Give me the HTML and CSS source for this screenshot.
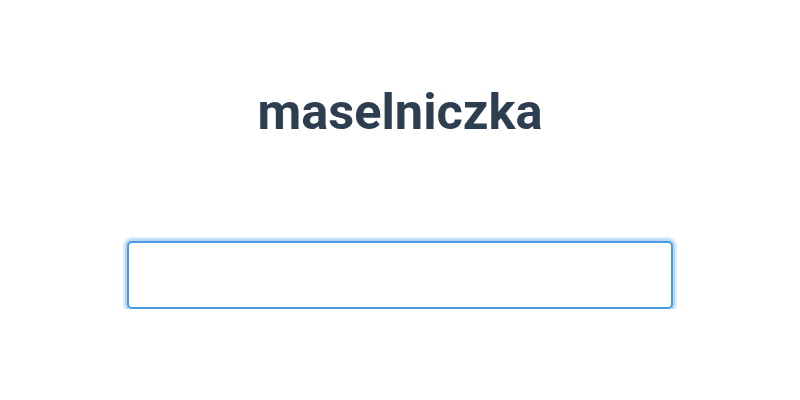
FILE: index.html
```
<!DOCTYPE html>
<html>
<head>
<meta charset="utf-8">
<link rel="stylesheet" href="styles.css">
</head>
<body>
<div class="page">
  <h1 class="title">maselniczka</h1>
  <input class="field" type="text">
</div>
</body>
</html>
```
FILE: styles.css
```
html, body {
  margin: 0;
  padding: 0;
  background: #ffffff;
}
.page {
  display: flex;
  flex-direction: column;
  align-items: center;
  padding-top: 84px;
}
.title {
  margin: 0;
  font-family: Roboto, "Liberation Sans", sans-serif;
  font-weight: 700;
  font-size: 50.5px;
  line-height: 56px;
  color: #2c3e50;
}
.field {
  margin-top: 101px;
  box-sizing: border-box;
  width: 546px;
  height: 68px;
  border: 2px solid #4a9be0;
  border-radius: 5px;
  box-shadow: 0 0 0 2px #b5d7f5, 0 0 0 4px #dcebfa;
  outline: none;
  background: #fff;
}
```
